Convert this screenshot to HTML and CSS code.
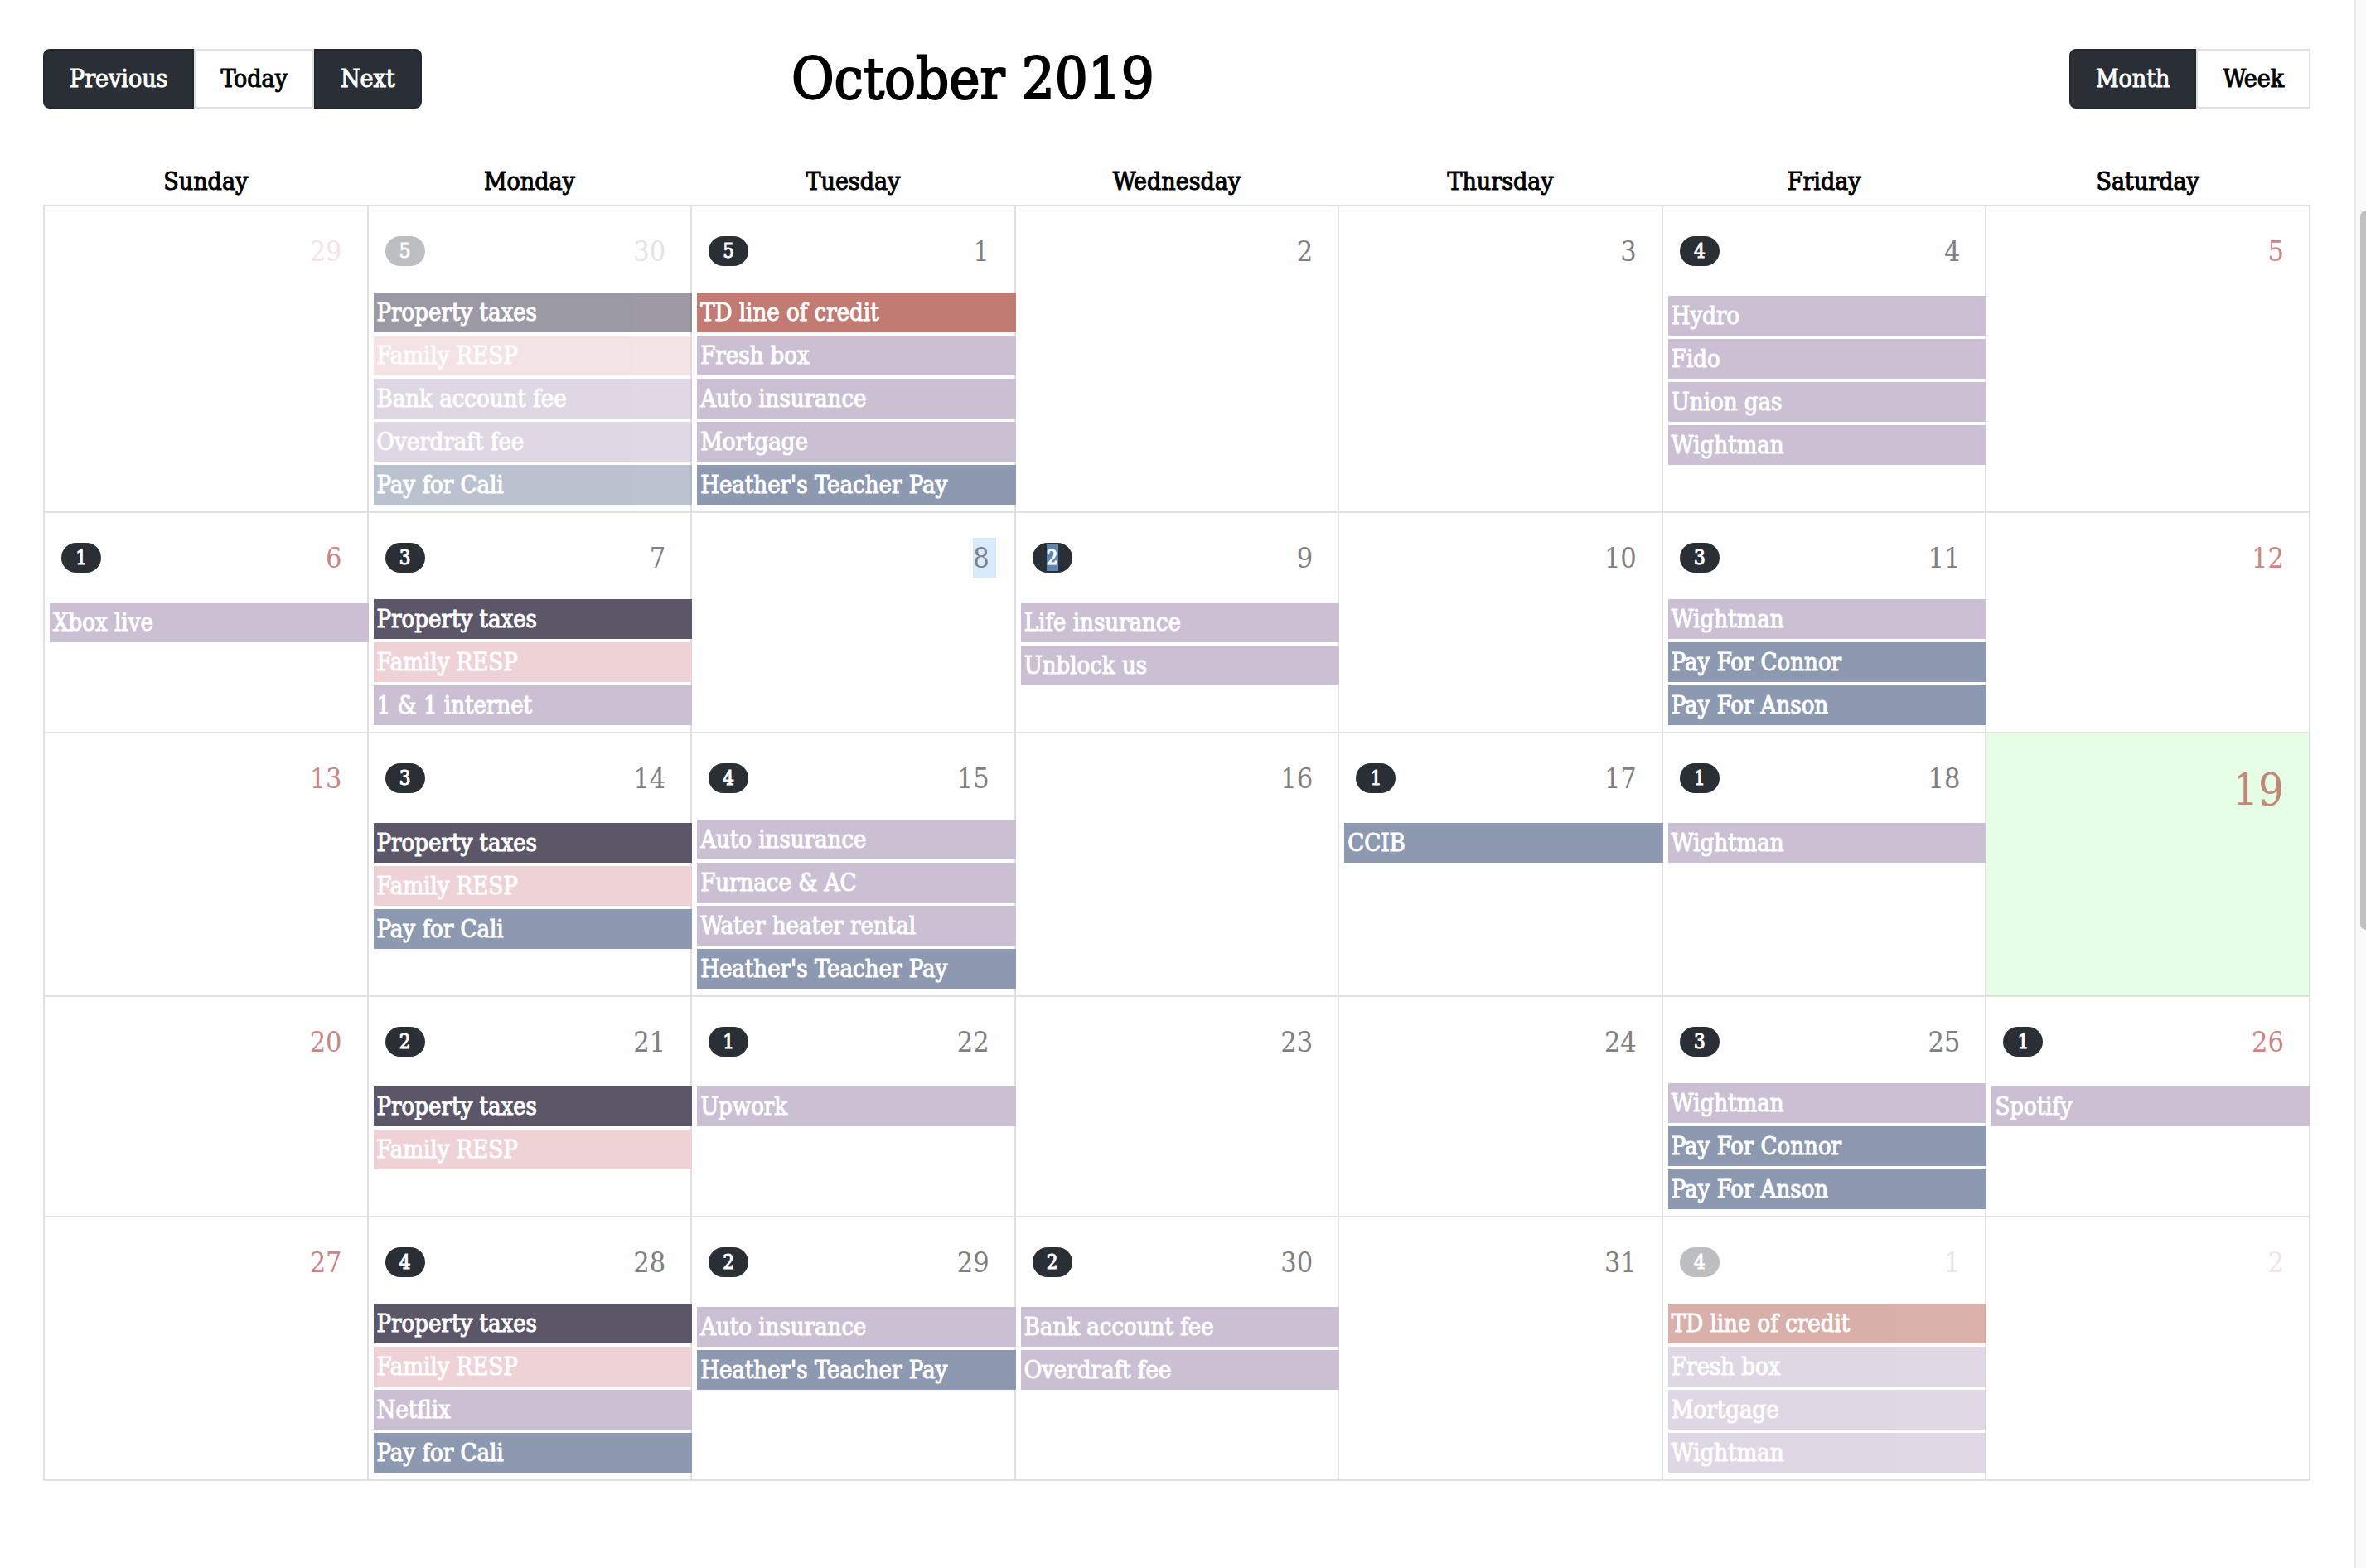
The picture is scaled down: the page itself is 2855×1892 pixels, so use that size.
FILE: index.html
```html
<!DOCTYPE html>
<html lang="en">
<head>
<meta charset="utf-8">
<meta name="viewport" content="width=device-width, initial-scale=1">
<title>October 2019</title>
<link rel="stylesheet" href="styles.css">
</head>
<body>
<main class="page">
  <header class="toolbar">
    <div class="group">
      <button class="btn btn-dark" type="button">Previous</button>
      <button class="btn" type="button">Today</button>
      <button class="btn btn-dark" type="button">Next</button>
    </div>
    <h1 class="title">October 2019</h1>
    <div class="group">
      <button class="btn btn-dark" type="button">Month</button>
      <button class="btn" type="button">Week</button>
    </div>
  </header>
  <table class="calendar">
    <thead>
      <tr><th>Sunday</th><th>Monday</th><th>Tuesday</th><th>Wednesday</th><th>Thursday</th><th>Friday</th><th>Saturday</th></tr>
    </thead>
    <tbody>
      <tr>
        <td class="weekend outside"><div class="head"><span class="num">29</span></div></td>
        <td class="full outside"><div class="head"><span class="badge">5</span><span class="num">30</span></div>
          <ul class="events"><li class="event tax">Property taxes</li><li class="event savings">Family RESP</li><li class="event">Bank account fee</li><li class="event">Overdraft fee</li><li class="event income">Pay for Cali</li></ul></td>
        <td class="full"><div class="head"><span class="badge">5</span><span class="num">1</span></div>
          <ul class="events"><li class="event debt">TD line of credit</li><li class="event">Fresh box</li><li class="event">Auto insurance</li><li class="event">Mortgage</li><li class="event income">Heather's Teacher Pay</li></ul></td>
        <td><div class="head"><span class="num">2</span></div></td>
        <td><div class="head"><span class="num">3</span></div></td>
        <td><div class="head"><span class="badge">4</span><span class="num">4</span></div>
          <ul class="events"><li class="event">Hydro</li><li class="event">Fido</li><li class="event">Union gas</li><li class="event">Wightman</li></ul></td>
        <td class="weekend"><div class="head"><span class="num">5</span></div></td>
      </tr>
      <tr>
        <td class="weekend"><div class="head"><span class="badge">1</span><span class="num">6</span></div>
          <ul class="events"><li class="event">Xbox live</li></ul></td>
        <td class="full"><div class="head"><span class="badge">3</span><span class="num">7</span></div>
          <ul class="events"><li class="event tax">Property taxes</li><li class="event savings">Family RESP</li><li class="event">1 &amp; 1 internet</li></ul></td>
        <td><div class="head"><span class="num selected">8</span></div></td>
        <td><div class="head"><span class="badge"><span class="selected-count">2</span></span><span class="num">9</span></div>
          <ul class="events"><li class="event">Life insurance</li><li class="event">Unblock us</li></ul></td>
        <td><div class="head"><span class="num">10</span></div></td>
        <td class="full"><div class="head"><span class="badge">3</span><span class="num">11</span></div>
          <ul class="events"><li class="event">Wightman</li><li class="event income">Pay For Connor</li><li class="event income">Pay For Anson</li></ul></td>
        <td class="weekend"><div class="head"><span class="num">12</span></div></td>
      </tr>
      <tr>
        <td class="weekend"><div class="head"><span class="num">13</span></div></td>
        <td><div class="head"><span class="badge">3</span><span class="num">14</span></div>
          <ul class="events"><li class="event tax">Property taxes</li><li class="event savings">Family RESP</li><li class="event income">Pay for Cali</li></ul></td>
        <td class="full"><div class="head"><span class="badge">4</span><span class="num">15</span></div>
          <ul class="events"><li class="event">Auto insurance</li><li class="event">Furnace &amp; AC</li><li class="event">Water heater rental</li><li class="event income">Heather's Teacher Pay</li></ul></td>
        <td><div class="head"><span class="num">16</span></div></td>
        <td><div class="head"><span class="badge">1</span><span class="num">17</span></div>
          <ul class="events"><li class="event income">CCIB</li></ul></td>
        <td><div class="head"><span class="badge">1</span><span class="num">18</span></div>
          <ul class="events"><li class="event">Wightman</li></ul></td>
        <td class="weekend today"><div class="head"><span class="num">19</span></div></td>
      </tr>
      <tr>
        <td class="weekend"><div class="head"><span class="num">20</span></div></td>
        <td><div class="head"><span class="badge">2</span><span class="num">21</span></div>
          <ul class="events"><li class="event tax">Property taxes</li><li class="event savings">Family RESP</li></ul></td>
        <td><div class="head"><span class="badge">1</span><span class="num">22</span></div>
          <ul class="events"><li class="event">Upwork</li></ul></td>
        <td><div class="head"><span class="num">23</span></div></td>
        <td><div class="head"><span class="num">24</span></div></td>
        <td class="full"><div class="head"><span class="badge">3</span><span class="num">25</span></div>
          <ul class="events"><li class="event">Wightman</li><li class="event income">Pay For Connor</li><li class="event income">Pay For Anson</li></ul></td>
        <td class="weekend"><div class="head"><span class="badge">1</span><span class="num">26</span></div>
          <ul class="events"><li class="event">Spotify</li></ul></td>
      </tr>
      <tr>
        <td class="weekend"><div class="head"><span class="num">27</span></div></td>
        <td class="full"><div class="head"><span class="badge">4</span><span class="num">28</span></div>
          <ul class="events"><li class="event tax">Property taxes</li><li class="event savings">Family RESP</li><li class="event">Netflix</li><li class="event income">Pay for Cali</li></ul></td>
        <td><div class="head"><span class="badge">2</span><span class="num">29</span></div>
          <ul class="events"><li class="event">Auto insurance</li><li class="event income">Heather's Teacher Pay</li></ul></td>
        <td><div class="head"><span class="badge">2</span><span class="num">30</span></div>
          <ul class="events"><li class="event">Bank account fee</li><li class="event">Overdraft fee</li></ul></td>
        <td><div class="head"><span class="num">31</span></div></td>
        <td class="full outside"><div class="head"><span class="badge">4</span><span class="num">1</span></div>
          <ul class="events"><li class="event debt">TD line of credit</li><li class="event">Fresh box</li><li class="event">Mortgage</li><li class="event">Wightman</li></ul></td>
        <td class="weekend outside"><div class="head"><span class="num">2</span></div></td>
      </tr>
    </tbody>
  </table>
</main>
<div class="scroll-track" aria-hidden="true"><div class="scroll-thumb"></div></div>
</body>
</html>
```
FILE: styles.css
```css
* {
  box-sizing: border-box;
}

body {
  margin: 0;
  display: flex;
  min-height: 100vh;
  background: #fefefe;
  color: #000;
  font: 29px/48px "Roboto Slab", "DejaVu Serif Condensed", "DejaVu Serif", serif;
  -webkit-text-stroke-width: 1px;
}

.page {
  flex: 1;
  min-width: 0;
  padding: 59px 53px 0 52px;
}

/* Toolbar */
.toolbar {
  display: grid;
  grid-template-columns: 33% 1fr auto;
  align-items: center;
  margin-bottom: 64px;
}

.group {
  display: flex;
}

.btn {
  height: 72px;
  padding: 0 30px;
  border: 2px solid #e0e0e0;
  background: #fefefe;
  color: #000;
  font: inherit;
  font-size: 30px;
}

.btn-dark {
  border-color: #25292f;
  background: #2a2e35;
  color: #fff;
}

.btn-dark:first-child {
  border-radius: 8px 0 0 8px;
}

.btn-dark:last-child {
  border-radius: 0 8px 8px 0;
}

.title {
  margin: 0;
  font-size: 70px;
  line-height: 70px;
  font-weight: 500;
  -webkit-text-stroke-width: 2px;
}

/* Month grid */
.calendar {
  width: 100%;
  table-layout: fixed;
  border-collapse: collapse;
}

.calendar th {
  padding: 0 0 4px;
  font-size: 30px;
  font-weight: 500;
}

.calendar td {
  height: 266px;
  padding: 0;
  border: 2px solid #e0e0e0;
  vertical-align: top;
}

.head {
  display: flex;
  align-items: flex-start;
  padding: 30px 22px 30px 20px;
}

.full .head {
  padding-bottom: 26px;
}

.badge {
  width: 48px;
  height: 36px;
  margin-top: 6px;
  border-radius: 18px;
  background: #2a2e35;
  color: #fff;
  font-size: 24px;
  line-height: 36px;
  text-align: center;
}

.num {
  margin-left: auto;
  padding-right: 8px;
  color: #808080;
  font-size: 34px;
  line-height: 48px;
  -webkit-text-stroke-width: 0;
}

.weekend .num {
  color: #cb8583;
}

.selected {
  background: #d9eaff;
}

.selected-count {
  display: inline-block;
  line-height: 32px;
  background: #5f86b3;
}

.today {
  background: #e5fce5;
}

.today .num {
  color: #c18778;
  font-size: 54px;
  line-height: 78px;
}

.events {
  display: grid;
  gap: 4px;
  margin: 0 -2px 0 6px;
  padding: 0;
  list-style: none;
}

.full .events {
  padding-bottom: 8px;
}

.event {
  padding: 0 4px;
  background: #cbbfd3;
  color: #fff;
  white-space: nowrap;
  overflow: hidden;
}

.tax {
  background: #5b5768;
}

.savings {
  background: #efd2d6;
}

.income {
  background: #8d99b0;
}

.debt {
  background: #c27b72;
}

.outside .num {
  opacity: 0.2;
}

.outside .badge {
  opacity: 0.3;
}

.outside .event {
  opacity: 0.6;
}

/* Scroll bar */
.scroll-track {
  display: flex;
  flex-direction: column;
  align-items: flex-end;
  width: 14px;
  height: 100vh;
  padding-top: 254px;
  border-left: 2px solid #e8e8e8;
  background: #fafafa;
}

.scroll-thumb {
  width: 7px;
  height: 53%;
  border-radius: 7px 0 0 7px;
  background: #c1c1c1;
}
```
